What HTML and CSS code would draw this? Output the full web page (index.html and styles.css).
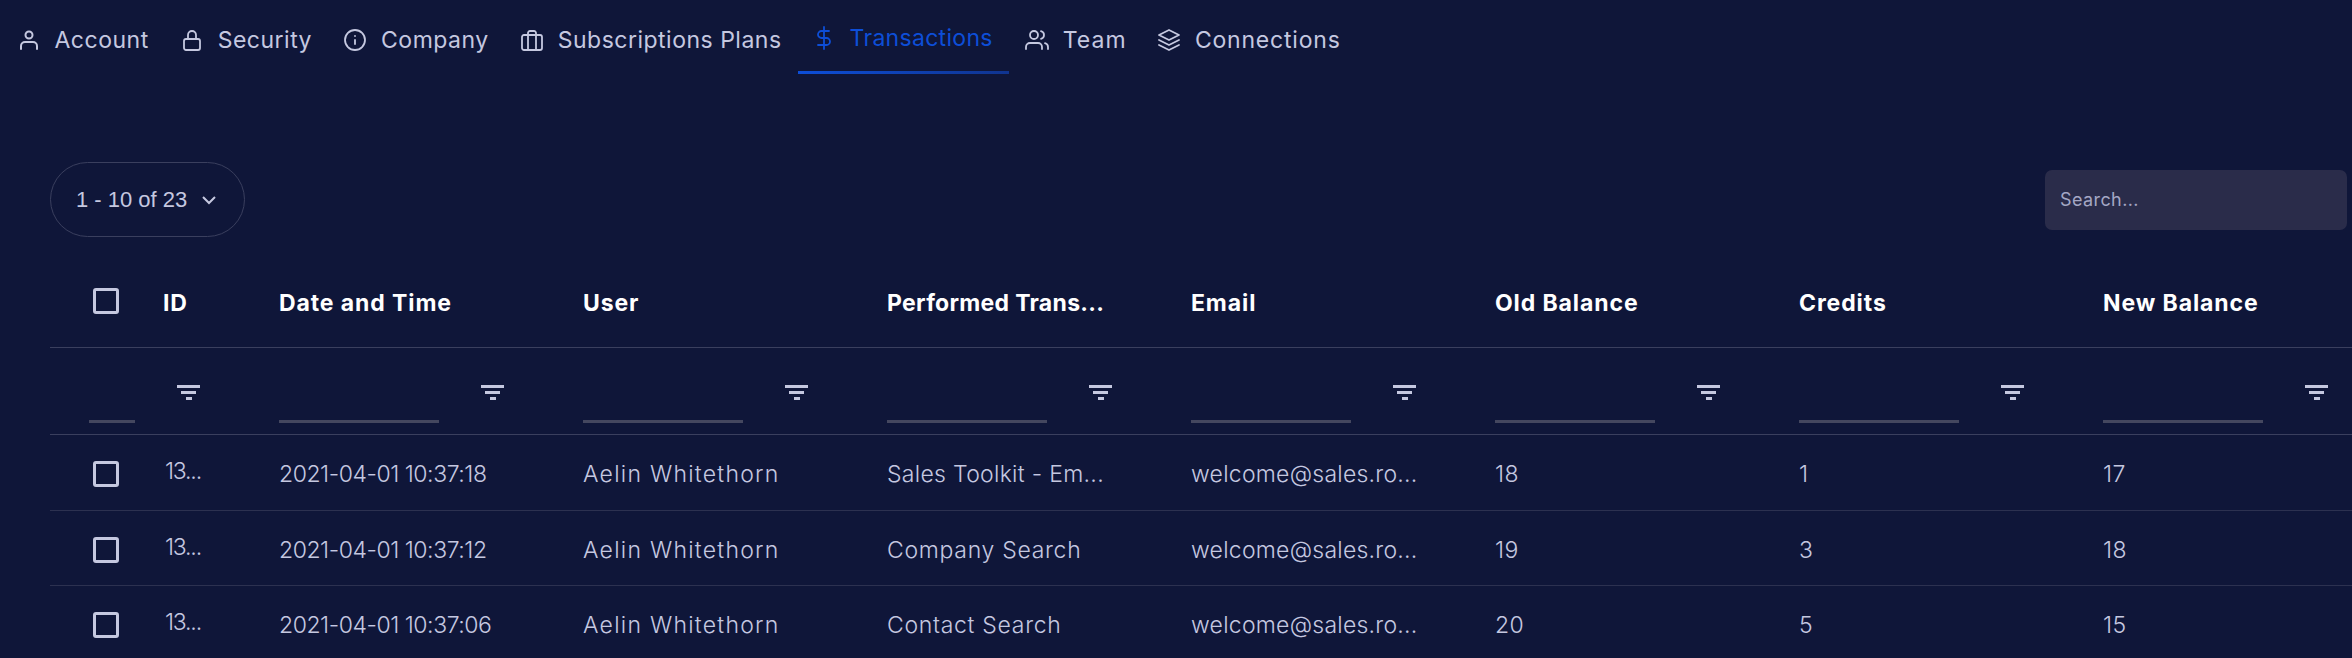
FILE: index.html
```html
<!DOCTYPE html>
<html>

<head>
    <title>Transactions</title>
    <link rel="stylesheet" href="styles.css">
</head>

<body>
    <nav class="tabs">
        <a class="tab tab-account">
            <svg viewBox="0 0 24 24"><circle cx="12" cy="7" r="3.500" /><path d="M4 21v-3a4 4 0 0 1 4-4h8a4 4 0 0 1 4 4v3" /></svg>
            Account
        </a>
        <a class="tab">
            <svg viewBox="0 0 24 24"><rect x="4" y="11" width="16" height="11" rx="2" /><path d="M8 11V7a4 4 0 0 1 8 0v4" /></svg>
            Security
        </a>
        <a class="tab">
            <svg viewBox="0 0 24 24"><circle cx="12" cy="12" r="10" /><path d="M12 16v-4M12 8h.01" /></svg>
            Company
        </a>
        <a class="tab">
            <svg viewBox="0 0 24 24"><rect x="2" y="7" width="20" height="15" rx="2" /><path d="M16 22V5a2 2 0 0 0-2-2h-4a2 2 0 0 0-2 2v17" /></svg>
            Subscriptions Plans
        </a>
        <a class="tab tab-active">
            <svg viewBox="0 0 24 24"><path d="M12 1v22M17 5H9.500a3.500 3.500 0 0 0 0 7h5a3.500 3.500 0 0 1 0 7H6" /></svg>
            Transactions
        </a>
        <a class="tab tab-team">
            <svg viewBox="0 0 24 24"><path d="M17 21v-2a4 4 0 0 0-4-4H5a4 4 0 0 0-4 4v2" /><circle cx="9" cy="7" r="4" /><path d="M23 21v-2a4 4 0 0 0-3-3.870M16 3.130a4 4 0 0 1 0 7.750" /></svg>
            Team
        </a>
        <a class="tab tab-connections">
            <svg viewBox="0 0 24 24"><path d="M12 2 2 7l10 5 10-5-10-5zM2 17l10 5 10-5M2 12l10 5 10-5" /></svg>
            Connections
        </a>
    </nav>

    <div class="toolbar">
        <button class="page-select">1 - 10 of 23
            <svg viewBox="0 0 24 24"><path d="m6 9 6 6 6-6" /></svg>
        </button>
        <div class="search">Search...</div>
    </div>

    <div class="grid-table">
        <div class="row head-row">
            <div class="check-cell"><span class="checkbox"></span></div>
            <div>ID</div>
            <div>Date and Time</div>
            <div>User</div>
            <div class="col-tight">Performed Trans...</div>
            <div>Email</div>
            <div>Old Balance</div>
            <div>Credits</div>
            <div>New Balance</div>
        </div>

        <div class="row filter-row">
            <div></div>
            <div class="filter-cell filter-id"><span class="filter-icon"><i></i><i></i><i></i></span><span class="filter-line"></span></div>
            <div class="filter-cell"><span class="filter-icon"><i></i><i></i><i></i></span><span class="filter-line"></span></div>
            <div class="filter-cell"><span class="filter-icon"><i></i><i></i><i></i></span><span class="filter-line"></span></div>
            <div class="filter-cell"><span class="filter-icon"><i></i><i></i><i></i></span><span class="filter-line"></span></div>
            <div class="filter-cell"><span class="filter-icon"><i></i><i></i><i></i></span><span class="filter-line"></span></div>
            <div class="filter-cell"><span class="filter-icon"><i></i><i></i><i></i></span><span class="filter-line"></span></div>
            <div class="filter-cell"><span class="filter-icon"><i></i><i></i><i></i></span><span class="filter-line"></span></div>
            <div class="filter-cell"><span class="filter-icon"><i></i><i></i><i></i></span><span class="filter-line"></span></div>
        </div>

        <div class="row data-row">
            <div class="check-cell"><span class="checkbox"></span></div>
            <div class="id-value">13...</div>
            <div class="col-date">2021-04-01 10:37:18</div>
            <div class="col-user">Aelin Whitethorn</div>
            <div class="col-tight">Sales Toolkit - Em...</div>
            <div class="col-email">welcome@sales.ro...</div>
            <div>18</div>
            <div>1</div>
            <div>17</div>
        </div>

        <div class="row data-row">
            <div class="check-cell"><span class="checkbox"></span></div>
            <div class="id-value">13...</div>
            <div class="col-date">2021-04-01 10:37:12</div>
            <div class="col-user">Aelin Whitethorn</div>
            <div class="col-task">Company Search</div>
            <div class="col-email">welcome@sales.ro...</div>
            <div>19</div>
            <div>3</div>
            <div>18</div>
        </div>

        <div class="row data-row">
            <div class="check-cell"><span class="checkbox"></span></div>
            <div class="id-value">13...</div>
            <div class="col-date">2021-04-01 10:37:06</div>
            <div class="col-user">Aelin Whitethorn</div>
            <div class="col-task">Contact Search</div>
            <div class="col-email">welcome@sales.ro...</div>
            <div>20</div>
            <div>5</div>
            <div>15</div>
        </div>
    </div>
</body>

</html>
```

FILE: styles.css
```css
html,
body {
    height: 658px;
    overflow: hidden;
}

body {
    background-color: #0f1639;
    color: #c5c8e0;
    font-family: Inter, 'Open Sans', sans-serif;
    font-size: 23px;
    letter-spacing: 0.5px;
    margin: 0;
    padding: 0;
}

/* tabs */
.tabs {
    display: flex;
    gap: 31px;
    height: 72px;
    padding-left: 16.500px;
}

.tab {
    display: flex;
    align-items: center;
    gap: 14px;
    height: 80px;
    white-space: nowrap;
}

.tab svg {
    width: 24px;
    height: 24px;
    fill: none;
    stroke: currentColor;
    stroke-width: 1.800;
    stroke-linecap: round;
    stroke-linejoin: round;
    flex: none;
}

.tab-account svg {
    stroke-width: 2;
}

.tab-active {
    color: #0d4ed8;
    height: 74px;
    box-sizing: border-box;
    margin-left: -15px;
    padding: 4px 16px 0 14px;
    letter-spacing: 0.300px;
    border-bottom: 3px solid;
    border-image: linear-gradient(90deg, #0d4ed8, #10348f) 1;
}

.tab-team {
    margin-left: -15px;
    letter-spacing: 1.100px;
}

.tab-connections {
    margin-left: -1px;
    letter-spacing: 0.800px;
}

/* toolbar */
.toolbar {
    display: flex;
    justify-content: space-between;
    align-items: center;
    height: 75px;
    margin: 90px 5px 0 50px;
}

.page-select {
    display: flex;
    align-items: center;
    gap: 10px;
    height: 75px;
    width: 195px;
    box-sizing: border-box;
    padding: 0 0 0 25px;
    background: none;
    border: 1px solid #3a3f5e;
    border-radius: 38px;
    color: #c5c8e0;
    font-family: 'Liberation Sans', Arial, sans-serif;
    font-size: 22px;
    letter-spacing: 0;
}

.page-select svg {
    width: 24px;
    height: 24px;
    fill: none;
    stroke: currentColor;
    stroke-width: 2;
}

.search {
    display: flex;
    align-items: center;
    width: 302px;
    height: 60px;
    box-sizing: border-box;
    padding: 0 15px;
    background-color: #2a2c4a;
    border-radius: 7px;
    color: #a4a7c4;
    font-size: 18px;
    letter-spacing: 0.4px;
}

/* table */
.grid-table {
    margin: 30px 0 0 50px;
}

.row {
    display: grid;
    grid-template-columns: 113px 116px repeat(7, 304px);
    border-bottom: 1px solid #3a3f5e;
    width: 2302px;
    white-space: nowrap;
}

.head-row {
    box-sizing: border-box;
    height: 81px;
    padding-bottom: 8px;
    color: #fff;
    font-weight: 700;
    letter-spacing: 0.9px;
    align-items: center;
}

.head-row .check-cell {
    margin-bottom: 4px;
}

.head-row .col-tight {
    letter-spacing: 0.3px;
}

.filter-row {
    height: 86px;
    grid-template-columns: 39px 190px repeat(7, 304px);
}

.data-row {
    height: 70.500px;
    padding-top: 4px;
    align-items: center;
    font-weight: 350;
    border-bottom-color: #2c3150;
}

.check-cell {
    padding-left: 43px;
}

.id-value {
    padding: 0 0 6px 2px;
    letter-spacing: -1.200px;
}

.col-date {
    letter-spacing: -0.450px;
}

.col-user {
    letter-spacing: 1.250px;
}

.col-task {
    letter-spacing: 0.700px;
}

.col-tight {
    letter-spacing: 0.300px;
}

.col-email {
    letter-spacing: 0.250px;
}

.checkbox {
    display: block;
    width: 26px;
    height: 26px;
    box-sizing: border-box;
    border: 3px solid #c5c8e0;
    border-radius: 3px;
}

/* filter row */
.filter-cell {
    display: flex;
    flex-direction: column;
}

.filter-icon {
    display: flex;
    flex-direction: column;
    align-items: center;
    gap: 3px;
    width: 23px;
    margin: 37px 0 0 202px;
}

.filter-id .filter-icon {
    margin-left: 88px;
}

.filter-icon i {
    display: block;
    height: 3px;
    background-color: #c5c8e0;
    width: 23px;
}

.filter-icon i:nth-child(2) {
    width: 15px;
}

.filter-icon i:nth-child(3) {
    width: 6px;
}

.filter-line {
    display: block;
    height: 3px;
    margin-top: 20px;
    width: 160px;
    background-color: #44475f;
}

.filter-id .filter-line {
    width: 46px;
}
```
